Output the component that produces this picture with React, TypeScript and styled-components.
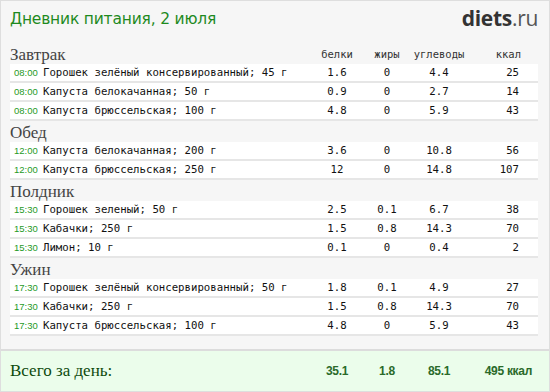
import { FC } from "react";
import styled, { createGlobalStyle } from "styled-components";

type Item = { time: string; name: string; p: string; f: string; c: string; kcal: string };
type Meal = { title: string; items: Item[] };

const meals: Meal[] = [
  {
    title: "Завтрак",
    items: [
      { time: "08:00", name: "Горошек зелёный консервированный; 45 г", p: "1.6", f: "0", c: "4.4", kcal: "25" },
      { time: "08:00", name: "Капуста белокачанная; 50 г", p: "0.9", f: "0", c: "2.7", kcal: "14" },
      { time: "08:00", name: "Капуста брюссельская; 100 г", p: "4.8", f: "0", c: "5.9", kcal: "43" },
    ],
  },
  {
    title: "Обед",
    items: [
      { time: "12:00", name: "Капуста белокачанная; 200 г", p: "3.6", f: "0", c: "10.8", kcal: "56" },
      { time: "12:00", name: "Капуста брюссельская; 250 г", p: "12", f: "0", c: "14.8", kcal: "107" },
    ],
  },
  {
    title: "Полдник",
    items: [
      { time: "15:30", name: "Горошек зеленый; 50 г", p: "2.5", f: "0.1", c: "6.7", kcal: "38" },
      { time: "15:30", name: "Кабачки; 250 г", p: "1.5", f: "0.8", c: "14.3", kcal: "70" },
      { time: "15:30", name: "Лимон; 10 г", p: "0.1", f: "0", c: "0.4", kcal: "2" },
    ],
  },
  {
    title: "Ужин",
    items: [
      { time: "17:30", name: "Горошек зелёный консервированный; 50 г", p: "1.8", f: "0.1", c: "4.9", kcal: "27" },
      { time: "17:30", name: "Кабачки; 250 г", p: "1.5", f: "0.8", c: "14.3", kcal: "70" },
      { time: "17:30", name: "Капуста брюссельская; 100 г", p: "4.8", f: "0", c: "5.9", kcal: "43" },
    ],
  },
];

const GlobalStyle = createGlobalStyle`
  body {
    margin: 0;
    background: #ffffff;
  }
`;

const COLS = "302px 50px 50px 54px 71px";

const App: FC = (): JSX.Element => {
  return (
    <>
      <GlobalStyle />
      <Page>
        <Header>
          <Title>Дневник питания, 2 июля</Title>
          <Logo>
            <b>diets</b>.ru
          </Logo>
        </Header>
        <Body>
          {meals.map((meal, mi) => (
            <div key={meal.title}>
              <SectionHead>
                <SectionTitle>{meal.title}</SectionTitle>
                {mi === 0 && (
                  <>
                    <ColHead>белки</ColHead>
                    <ColHead>жиры</ColHead>
                    <ColHead>углеводы</ColHead>
                    <ColHead $right>ккал</ColHead>
                  </>
                )}
              </SectionHead>
              {meal.items.map((it, i) => (
                <Row key={i}>
                  <NameCell>
                    <Time>{it.time}</Time>
                    {it.name}
                  </NameCell>
                  <Num>{it.p}</Num>
                  <Num>{it.f}</Num>
                  <Num>{it.c}</Num>
                  <Num $right>{it.kcal}</Num>
                </Row>
              ))}
            </div>
          ))}
        </Body>
        <Footer>
          <FooterTitle>Всего за день:</FooterTitle>
          <Total>35.1</Total>
          <Total>1.8</Total>
          <Total>85.1</Total>
          <Total $right>495 ккал</Total>
        </Footer>
      </Page>
    </>
  );
};

export default App;

const Page = styled.div`
  width: 550px;
  height: 392px;
  box-sizing: border-box;
  border: 1px solid #dedede;
  background: #f6f6f6;
  display: flex;
  flex-direction: column;
  overflow: hidden;
`;

const Header = styled.div`
  display: flex;
  justify-content: space-between;
  align-items: center;
  height: 32px;
  padding: 2px 11px 0 9px;
  margin-bottom: 8px;
`;

const Title = styled.div`
  font-family: "DejaVu Sans", sans-serif;
  font-size: 15.5px;
  color: #1e8a1e;
  letter-spacing: -0.2px;
`;

const Logo = styled.div`
  font-family: "Open Sans", sans-serif;
  font-size: 21px;
  color: #555;
  letter-spacing: -0.3px;
  margin-top: -2px;

  b {
    font-weight: 700;
    color: #333;
  }
`;

const Body = styled.div`
  padding: 0 11px 0 9px;
  flex: 1;
`;

const SectionHead = styled.div`
  display: grid;
  grid-template-columns: ${COLS};
  height: 21px;
  align-items: end;
`;

const SectionTitle = styled.div`
  font-family: "Liberation Serif", serif;
  font-size: 17px;
  color: #444;
  line-height: 19px;
`;

const ColHead = styled.div<{ $right?: boolean }>`
  font-family: "DejaVu Sans Mono", monospace;
  font-size: 10.5px;
  color: #333;
  line-height: 20px;
  text-align: ${({ $right }) => ($right ? "right" : "center")};
  padding-right: ${({ $right }) => ($right ? "16px" : "0")};
`;

const Row = styled.div`
  display: grid;
  grid-template-columns: ${COLS};
  height: 17px;
  align-items: center;
  background: #fff;
  border-bottom: 2px solid #e6e6e6;
  font-family: "DejaVu Sans Mono", monospace;
  font-size: 10.7px;
  color: #111;
`;

const NameCell = styled.div`
  white-space: nowrap;
  display: flex;
  align-items: center;
`;

const Time = styled.span`
  font-family: "Liberation Sans", Arial, sans-serif;
  font-size: 9.5px;
  color: #1f9a1f;
  width: 33px;
  padding-left: 4px;
  box-sizing: border-box;
`;

const Num = styled.div<{ $right?: boolean }>`
  text-align: ${({ $right }) => ($right ? "right" : "center")};
  padding-right: ${({ $right }) => ($right ? "18px" : "0")};
`;

const Footer = styled.div`
  display: grid;
  grid-template-columns: ${COLS};
  align-items: center;
  height: 40px;
  margin-top: 13px;
  padding: 0 11px 0 9px;
  background: #ebfdeb;
  border-top: 2px solid #dcdcdc;
`;

const FooterTitle = styled.div`
  font-family: "Liberation Serif", serif;
  font-size: 17px;
  color: #0d4a0d;
`;

const Total = styled.div<{ $right?: boolean }>`
  font-family: "Liberation Sans", Arial, sans-serif;
  font-weight: 700;
  font-size: 12px;
  color: #2a6a2a;
  text-align: ${({ $right }) => ($right ? "right" : "center")};
  padding-right: ${({ $right }) => ($right ? "5px" : "0")};
  letter-spacing: -0.3px;
`;
